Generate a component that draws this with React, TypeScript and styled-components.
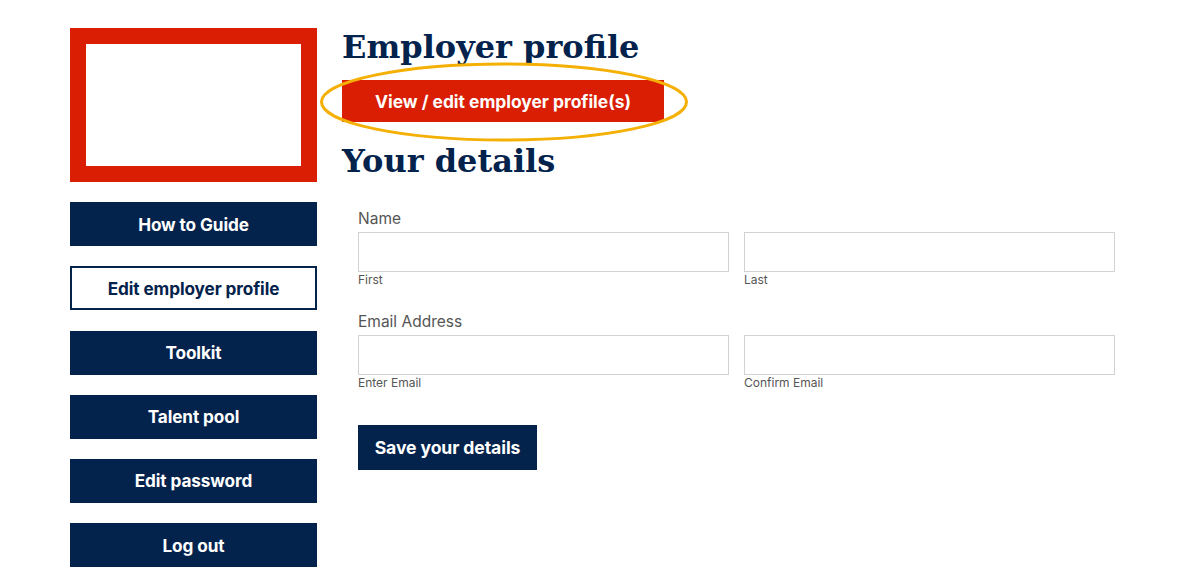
import React from 'react'
import styled, { createGlobalStyle } from 'styled-components'

const GlobalStyle = createGlobalStyle`
  html, body {
    margin: 0;
    padding: 0;
    background: #ffffff;
  }
  * {
    box-sizing: border-box;
  }
`;

const navy = '#03224c';
const red = '#d91e04';
const sans = `Inter, "Open Sans", "Liberation Sans", sans-serif`;

const Page = styled.div`
  display: flex;
  align-items: flex-start;
  gap: 25px;
  padding: 28px 0 0 70px;
  width: 1200px;
  height: 585px;
  overflow: hidden;
  font-family: ${sans};
`;

const Sidebar = styled.aside`
  width: 247px;
  display: flex;
  flex-direction: column;
  gap: 20.2px;
`;

const LogoBox = styled.div`
  height: 154px;
  border: 16px solid ${red};
  background: #ffffff;
`;

const NavButton = styled.a<{ $outline?: boolean }>`
  display: flex;
  align-items: center;
  justify-content: center;
  height: 44px;
  background: ${p => (p.$outline ? '#ffffff' : navy)};
  color: ${p => (p.$outline ? navy : '#ffffff')};
  border: 2px solid ${navy};
  font-size: 17.2px;
  font-weight: 700;
  letter-spacing: -0.1px;
  text-decoration: none;
`;

const Main = styled.main`
  width: 775px;
  display: flex;
  flex-direction: column;
`;

const Heading = styled.h1`
  margin: 0;
  font-family: "DejaVu Serif", "Liberation Serif", serif;
  font-weight: 700;
  font-size: 32px;
  line-height: 38px;
  letter-spacing: 0;
  color: ${navy};
`;

const HighlightWrap = styled.div`
  position: relative;
  margin: 14px 0 20px;
  align-self: flex-start;
`;

const RedButton = styled.a`
  display: flex;
  align-items: center;
  justify-content: center;
  width: 322px;
  height: 42px;
  background: ${red};
  color: #ffffff;
  font-size: 17.4px;
  font-weight: 700;
  letter-spacing: 0;
  text-decoration: none;
`;

const Ring = styled.svg`
  position: absolute;
  left: -22px;
  top: -17px;
  width: 368px;
  height: 80px;
  overflow: visible;
  pointer-events: none;
`;

const Form = styled.form`
  padding: 29px 0 0 16px;
  display: flex;
  flex-direction: column;
`;

const FieldGroup = styled.div`
  margin-bottom: 24px;
`;

const GroupLabel = styled.div`
  font-size: 15.5px;
  line-height: 20px;
  color: #555555;
  margin-bottom: 3px;
`;

const Row = styled.div`
  display: grid;
  grid-template-columns: 371px 371px;
  column-gap: 15px;
`;

const Field = styled.div`
  display: flex;
  flex-direction: column;
`;

const Input = styled.input`
  height: 40px;
  border: 1px solid #d2d2d2;
  background: #ffffff;
  outline: none;
`;

const SubLabel = styled.span`
  font-size: 12px;
  line-height: 16px;
  color: #555555;
`;

const SaveButton = styled.button`
  align-self: flex-start;
  margin-top: 10px;
  width: 179px;
  height: 45px;
  border: none;
  background: ${navy};
  color: #ffffff;
  font-family: ${sans};
  font-size: 17.6px;
  font-weight: 700;
  letter-spacing: -0.1px;
`;

const navItems = ['How to Guide', 'Edit employer profile', 'Toolkit', 'Talent pool', 'Edit password', 'Log out'];

const App = () => {
  return (
    <>
      <GlobalStyle />
      <Page>
        <Sidebar>
          <LogoBox />
          {navItems.map(item => (
            <NavButton key={item} $outline={item === 'Edit employer profile'}>{item}</NavButton>
          ))}
        </Sidebar>
        <Main>
          <Heading>Employer profile</Heading>
          <HighlightWrap>
            <RedButton>View / edit employer profile(s)</RedButton>
            <Ring viewBox="0 0 368 80">
              <ellipse cx="184" cy="39" rx="182.5" ry="38" fill="none" stroke="#f5b006" strokeWidth="3" />
            </Ring>
          </HighlightWrap>
          <Heading>Your details</Heading>
          <Form>
            <FieldGroup>
              <GroupLabel>Name</GroupLabel>
              <Row>
                <Field>
                  <Input />
                  <SubLabel>First</SubLabel>
                </Field>
                <Field>
                  <Input />
                  <SubLabel>Last</SubLabel>
                </Field>
              </Row>
            </FieldGroup>
            <FieldGroup>
              <GroupLabel>Email Address</GroupLabel>
              <Row>
                <Field>
                  <Input />
                  <SubLabel>Enter Email</SubLabel>
                </Field>
                <Field>
                  <Input />
                  <SubLabel>Confirm Email</SubLabel>
                </Field>
              </Row>
            </FieldGroup>
            <SaveButton type="button">Save your details</SaveButton>
          </Form>
        </Main>
      </Page>
    </>
  )
}

export default App
